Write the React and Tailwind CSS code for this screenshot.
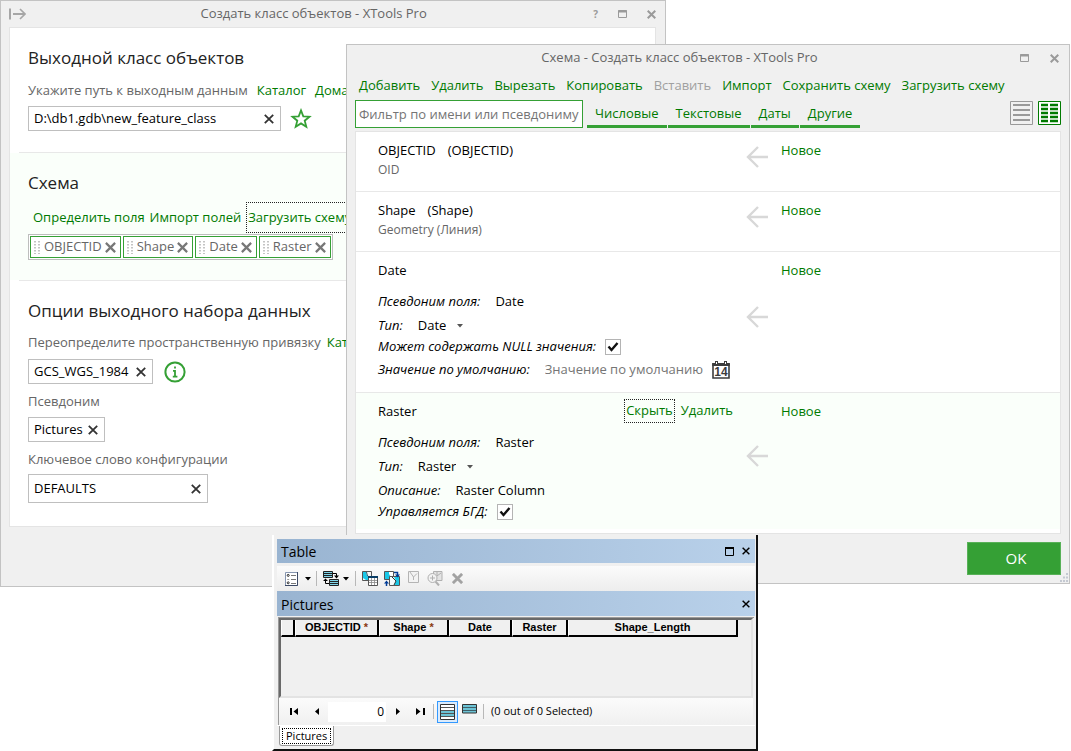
import { useState } from 'react';

const TAGS = ['OBJECTID', 'Shape', 'Date', 'Raster'];

const MENU = [
  { label: 'Добавить' },
  { label: 'Удалить' },
  { label: 'Вырезать' },
  { label: 'Копировать' },
  { label: 'Вставить', disabled: true },
  { label: 'Импорт' },
  { label: 'Сохранить схему' },
  { label: 'Загрузить схему' },
];

const FILTERS = ['Числовые', 'Текстовые', 'Даты', 'Другие'];

const COLUMNS = [
  { label: 'OBJECTID', required: true, width: 'w-[84px]' },
  { label: 'Shape', required: true, width: 'w-[70px]' },
  { label: 'Date', width: 'w-[63px]' },
  { label: 'Raster', width: 'w-[56px]' },
  { label: 'Shape_Length', width: 'w-[170px]' },
];

/* ---------- Icons ---------- */

function Cross({ size = 10, stroke = 1.8, className = '' }) {
  return (
    <svg width={size} height={size} viewBox="0 0 10 10" className={className} fill="none" stroke="currentColor" strokeWidth={stroke}>
      <path d="M0.8 0.8L9.2 9.2M9.2 0.8L0.8 9.2" />
    </svg>
  );
}

function Maximize() {
  return (
    <svg width="9" height="8" viewBox="0 0 9 8" fill="none" stroke="currentColor">
      <path d="M0.5 0.5h8v7h-8z" />
      <path d="M0 1.5h9" strokeWidth="2" />
    </svg>
  );
}

function Star() {
  return (
    <svg width="22" height="21" viewBox="0 0 22 21" fill="none" stroke="#35a035" strokeWidth="1.8" strokeLinejoin="miter">
      <path d="M11 2.4l2.3 5.9 6.2.4-4.8 4 1.6 6.1L11 15.4l-5.3 3.4 1.6-6.1-4.8-4 6.2-.4z" />
    </svg>
  );
}

function Info() {
  return (
    <svg width="22" height="22" viewBox="0 0 22 22" fill="none" stroke="#35a035" strokeWidth="2">
      <circle cx="11" cy="11" r="9.6" />
      <path d="M11 5.5v2M9 9.8h2v5.7M8.8 15.6h4.6" strokeWidth="1.8" />
    </svg>
  );
}

function Grip() {
  return (
    <svg width="7" height="13" viewBox="0 0 7 13" fill="#c4c4c4">
      {[0, 3, 6, 9, 12].map((y) => (
        <path key={y} d={`M0 ${y}h2v1.4h-2zM4 ${y}h2v1.4h-2z`} />
      ))}
    </svg>
  );
}

function ArrowLeft() {
  return (
    <svg width="22" height="22" viewBox="0 0 22 22" fill="none" stroke="#d8d8d8" strokeWidth="2.4">
      <path d="M22 11H2M12 1L2 11l10 10" />
    </svg>
  );
}

function Calendar() {
  return (
    <svg width="18" height="18" viewBox="0 0 18 18" fill="none" stroke="#3c3c3c">
      <path d="M1 3h16v14H1z" fill="#fff" strokeWidth="1.6" />
      <path d="M0.2 3.5h17.6" strokeWidth="3" />
      <path d="M4.5 0v3M13.5 0v3" strokeWidth="3" />
      <path d="M4.5 1v2M13.5 1v2" stroke="#fff" />
      <text x="9" y="15" textAnchor="middle" stroke="none" fill="#3c3c3c" className="font-['Liberation_Sans',sans-serif] text-[12px] font-bold">14</text>
    </svg>
  );
}

function ListOptions() {
  return (
    <svg width="13" height="14" viewBox="0 0 13 14" fill="none">
      <path d="M0.5 0.5h12v13h-12z" fill="#fff" stroke="#8796b0" />
      <path d="M12.5 0v13.5H0" stroke="#3c4a66" />
      <path d="M6 3.5h5M6 7.5h5M6 11.5h5" stroke="#777" />
      <circle cx="3.2" cy="3.4" r="1" stroke="#000" strokeWidth="0.8" />
      <path d="M2.2 7.5h2" stroke="#999" />
      <circle cx="3.2" cy="10.8" r="1" stroke="#000" strokeWidth="0.8" />
    </svg>
  );
}

function RelatedTables() {
  return (
    <svg width="16" height="15" viewBox="0 0 16 15" fill="none">
      <path d="M0.5 0.5h9v6h-9z" fill="#7fd4e8" stroke="#222" />
      <path d="M0 2.5h10M0 4.5h10" stroke="#222" />
      <path d="M6.5 8.5h9v6h-9z" fill="#7fd4e8" stroke="#222" />
      <path d="M6 10.5h10M6 12.5h10" stroke="#222" />
      <path d="M10 2.5h3.5V6M6 12.5H2.5V9" stroke="#000" />
      <path d="M11 4.6h5l-2.5 3zM0 10h5L2.5 7.4z" fill="#000" />
    </svg>
  );
}

function SelectByAttributes() {
  return (
    <svg width="16" height="15" viewBox="0 0 16 15" fill="none">
      <path d="M0.5 0.5h9v9h-9z" fill="#f7f7f7" stroke="#555" />
      <path d="M1 1h3l1 4 4 2v2H4L1 7z" fill="#19c8e8" />
      <path d="M4.5 1l1 4 3.500 1.500" stroke="#2a5a6c" />
      <path d="M6.5 5.5h9v9h-9z" fill="#fff" stroke="#555" />
      <path d="M6 6h10" stroke="#0a3d66" strokeWidth="2" />
      <path d="M7 9.5h8M7 11.5h8M9.5 7v7M12.5 7v7" stroke="#888" strokeWidth="0.8" />
    </svg>
  );
}

function SwitchSelection() {
  return (
    <svg width="16" height="16" viewBox="0 0 16 16" fill="none">
      <path d="M0.5 0.5h9v8h-9z" fill="#19c8e8" stroke="#555" />
      <path d="M5 1h4v5H7L5 3z" fill="#fff" />
      <path d="M5.5 5.5h10v9h-10z" fill="#f4fdff" stroke="#555" />
      <path d="M10 6h5v8h-5l2-4z" fill="#19c8e8" />
      <path d="M8 6l4 4-2 4" stroke="#333" />
      <path d="M10 1.5h3.5V4M2.5 15v-3" stroke="#003c96" strokeWidth="1.5" />
      <path d="M11 3.6h5l-2.5 3zM0 12.4h5l-2.5-3z" fill="#003c96" />
    </svg>
  );
}

function ClearSelection() {
  return (
    <svg width="11" height="12" viewBox="0 0 11 12" fill="none" stroke="#b4b4b4">
      <path d="M0.5 0.5h10v11h-10z" fill="#f3f3f3" />
      <path d="M2 1l3.5 5v3M5.5 6L9 2.500" />
    </svg>
  );
}

function ZoomSelected() {
  return (
    <svg width="16" height="15" viewBox="0 0 16 15" fill="none" stroke="#b0b0b0">
      <path d="M6.5 0.5h8.5v9H6.5z" fill="#e4e4e4" />
      <path d="M10 1v4l4-3" />
      <circle cx="5.5" cy="7" r="4.5" fill="#f3f3f3" />
      <path d="M3 7h5M5.5 4.5v5" />
      <path d="M8.5 10.5l3.5 4" strokeWidth="2" />
    </svg>
  );
}

function Rows({ selectedOnly }) {
  return selectedOnly ? (
    <svg width="15" height="10" viewBox="0 0 15 10" fill="none" stroke="#3f5f68">
      <path d="M0.5 0.5h14v8.5h-14z" fill="#6cc3d5" stroke="#333" />
      <path d="M1 3.5h13M1 6.5h13" />
    </svg>
  ) : (
    <svg width="15" height="16" viewBox="0 0 15 16" fill="none" stroke="#555">
      <path d="M0.5 0.5h14v15h-14z" fill="#fff" stroke="#333" />
      <path d="M1 6h13v6H1z" fill="#6cc3d5" stroke="none" />
      <path d="M1 3.5h13M1 6.5h13M1 9.5h13M1 12.5h13" />
    </svg>
  );
}

function Caret({ className = 'text-black' }) {
  return (
    <svg width="6" height="4" viewBox="0 0 6 4" fill="currentColor" className={`pointer-events-none ${className}`}>
      <path d="M0 0h6L3 3.6z" />
    </svg>
  );
}

/* ---------- Shared controls ---------- */

function LinkButton({ children, disabled, focused }) {
  return (
    <button
      type="button"
      disabled={disabled}
      className={`whitespace-nowrap ${disabled ? 'text-[#a0a0a0]' : 'text-[#007a00]'} ${
        focused ? 'border border-dotted border-[#222] px-px' : ''
      }`}
    >
      {children}
    </button>
  );
}

function ClearableInput({ id, value, className }) {
  const [text, setText] = useState(value);
  return (
    <div className={`flex items-center border border-[#bfbfbf] bg-white pr-[6px] text-black ${className}`}>
      <input
        id={id}
        className="min-w-0 flex-1 bg-transparent pl-[5px] outline-none"
        value={text}
        onChange={(e) => setText(e.target.value)}
      />
      <button type="button" aria-label="Очистить" onClick={() => setText('')} className="text-[#333]">
        <Cross />
      </button>
    </div>
  );
}

function CheckBox({ id }) {
  return (
    <span className="relative inline-flex">
      <input id={id} type="checkbox" defaultChecked className="peer size-4 appearance-none border border-[#b4b4b4] bg-white" />
      <svg viewBox="0 0 16 16" className="pointer-events-none absolute inset-0 hidden size-4 peer-checked:block" fill="none" stroke="#111" strokeWidth="2.4">
        <path d="M3.5 7.5l3 3.5 6-7" />
      </svg>
    </span>
  );
}

function TypeSelect({ id, value }) {
  return (
    <div className="flex items-center gap-[11px]">
      <select id={id} defaultValue={value} className="field-sizing-content appearance-none bg-transparent outline-none">
        <option>Date</option>
        <option>Raster</option>
      </select>
      <Caret className="text-[#555]" />
    </div>
  );
}

/* ---------- "Create feature class" window ---------- */

function CreateWindow() {
  return (
    <section className="absolute top-0 right-[405px] left-0 border border-[#c3c3c3] bg-[#f0f0f0] pr-[9px] pb-[59px] pl-2">
      <header className="flex h-[26px] items-center text-[#9a9a9a]">
        <button type="button" aria-label="Закрепить">
          <svg width="17" height="12" viewBox="0 0 17 12" fill="none" stroke="#a6a6a6" strokeWidth="2">
            <path d="M1 0.5v11M4 6h12" />
            <path d="M11 1l5 5-5 5" strokeWidth="1.6" />
          </svg>
        </button>
        <h1 className="flex-1 pl-2 text-center text-[13px] text-[#666]">Создать класс объектов - XTools Pro</h1>
        <div className="flex items-center gap-5">
          <button type="button" className="text-[10px] font-bold">?</button>
          <button type="button" aria-label="Развернуть"><Maximize /></button>
          <button type="button" aria-label="Закрыть"><Cross size={9} stroke={2.2} /></button>
        </div>
      </header>

      <div className="border border-[#e4e4e4] bg-white pb-[23px]">
        <div className="pl-[18px]">
          <h2 className="pt-4 text-[17px] leading-7 text-[#222]">Выходной класс объектов</h2>
          <div className="mt-[7px] flex h-6 items-center gap-[9px]">
            <label htmlFor="path" className="whitespace-nowrap">Укажите путь к выходным данным</label>
            <LinkButton>Каталог</LinkButton>
            <LinkButton>Дома</LinkButton>
          </div>
          <div className="mt-[3px] flex items-center gap-[9px]">
            <ClearableInput id="path" value="D:\db1.gdb\new_feature_class" className="h-[25px] w-[253px]" />
            <button type="button" aria-label="Избранное"><Star /></button>
          </div>
        </div>

        <div className="mt-[21px] ml-[9px] border-t border-[#e8e8e8]" />
        <div className="bg-[#fafffa] pb-5 pl-[18px]">
          <h2 className="pt-4 text-[17px] leading-7 text-[#222]">Схема</h2>
          <div className="mt-[5px] flex h-[31px] items-stretch gap-[5px] pl-[5px]">
            <LinkButton>Определить поля</LinkButton>
            <LinkButton>Импорт полей</LinkButton>
            <LinkButton focused>Загрузить схему</LinkButton>
          </div>
          <ul className="mt-px flex w-fit gap-[2px] border border-[#bdbdbd] bg-white p-px">
            {TAGS.map((tag) => (
              <li key={tag} className="flex h-[22px] items-center gap-[3px] border border-[#35a035] pr-1 pl-[3px]">
                <Grip />
                <span>{tag}</span>
                <button type="button" aria-label={`Удалить ${tag}`} className="text-[#777]">
                  <Cross size={11} stroke={2} />
                </button>
              </li>
            ))}
          </ul>
        </div>
        <div className="ml-[9px] border-t border-[#e8e8e8]" />

        <div className="pl-[18px]">
          <h2 className="pt-4 text-[17px] leading-7 text-[#222]">Опции выходного набора данных</h2>
          <div className="mt-[6px] flex h-6 items-center gap-[6px]">
            <label htmlFor="srs" className="whitespace-nowrap">Переопределите пространственную привязку</label>
            <LinkButton>Каталог</LinkButton>
          </div>
          <div className="mt-1 flex items-center gap-[11px]">
            <ClearableInput id="srs" value="GCS_WGS_1984" className="h-[25px] w-[125px]" />
            <button type="button" aria-label="Информация"><Info /></button>
          </div>
          <label htmlFor="alias" className="mt-[5px] block leading-6">Псевдоним</label>
          <ClearableInput id="alias" value="Pictures" className="mt-1 h-[25px] w-[77px]" />
          <label htmlFor="keyword" className="mt-[5px] block leading-6">Ключевое слово конфигурации</label>
          <ClearableInput id="keyword" value="DEFAULTS" className="mt-[3px] h-[29px] w-[180px]" />
        </div>
      </div>
    </section>
  );
}

/* ---------- Schema window ---------- */

function FieldRow({ active, actions, children }) {
  return (
    <li className={`grid grid-cols-[390px_35px_1fr] border-b border-[#e8e8e8] pt-[6px] last:border-b-0 ${active ? 'bg-[#fafffa]' : ''}`}>
      <div className="relative pl-[22px] text-black">
        {children}
        {actions && <div className="absolute top-0 right-[13px] flex h-6 items-stretch gap-[6px]">{actions}</div>}
      </div>
      <div className="self-center pb-4"><ArrowLeft /></div>
      <div className="leading-6"><LinkButton>Новое</LinkButton></div>
    </li>
  );
}

function SimpleField({ name, alias, type }) {
  return (
    <FieldRow>
      <div className="flex gap-3 leading-6">
        <span>{name}</span>
        <span>({alias})</span>
      </div>
      <p className="pb-[13px] text-[12px] leading-4 text-[#666]">{type}</p>
    </FieldRow>
  );
}

function Prop({ id, label, gap = 'gap-[15px]', height = 'h-6', children }) {
  return (
    <div className={`flex items-center ${gap} ${height}`}>
      <label htmlFor={id} className="whitespace-nowrap italic">{label}</label>
      {children}
    </div>
  );
}

function SchemaWindow() {
  return (
    <section className="absolute top-11 right-px left-[346px] border border-[#c3c3c3] bg-[#f0f0f0] px-2 pb-2">
      <header className="flex h-[26px] items-center pr-[2px] text-[#9a9a9a]">
        <h1 className="flex-1 pr-4 text-center text-[13px] text-[#666]">Схема - Создать класс объектов - XTools Pro</h1>
        <button type="button" aria-label="Развернуть"><Maximize /></button>
        <button type="button" aria-label="Закрыть" className="ml-[21px]"><Cross size={9} stroke={2.2} /></button>
      </header>

      <nav className="flex h-[29px] items-center gap-[11px] pl-1">
        {MENU.map((item) => (
          <LinkButton key={item.label} disabled={item.disabled}>{item.label}</LinkButton>
        ))}
      </nav>

      <div className="flex items-start">
        <input
          aria-label="Фильтр"
          placeholder="Фильтр по имени или псевдониму"
          className="h-[28px] w-[228px] border border-[#35a035] bg-white px-[3px] outline-none placeholder:text-[#757575]"
        />
        <div className="ml-1 flex gap-px">
          {FILTERS.map((f) => (
            <button key={f} type="button" className="h-[28px] border-b-3 border-[#35a035] px-2 pt-[3px] text-[#007a00]">{f}</button>
          ))}
        </div>
        <div className="mt-px ml-auto flex gap-[5px]">
          <button type="button" aria-label="Список">
            <svg width="23" height="24" viewBox="0 0 23 24" fill="none" stroke="#999">
              <path d="M0.5 0.5h22v23h-22z" />
              <path d="M3 4h17M3 9h17M3 14h17M3 19h17" strokeWidth="2" />
            </svg>
          </button>
          <button type="button" aria-label="Таблица">
            <svg width="23" height="24" viewBox="0 0 23 24" fill="none" stroke="#007a00">
              <path d="M0.5 0.5h22v23h-22z" fill="#fff" />
              <path d="M3 4h7M3 8h7M3 12h7M3 16h7M3 20h7M12 4h8M12 8h8M12 12h8M12 16h8M12 20h8" strokeWidth="2.4" />
            </svg>
          </button>
        </div>
      </div>

      <ul className="mt-[3px] border border-[#e4e4e4] bg-white pb-1">
        <SimpleField name="OBJECTID" alias="OBJECTID" type="OID" />
        <SimpleField name="Shape" alias="Shape" type="Geometry (Линия)" />
        <FieldRow>
          <p className="pb-2 leading-6">Date</p>
          <Prop label="Псевдоним поля:"><span>Date</span></Prop>
          <Prop id="date-type" label="Тип:"><TypeSelect id="date-type" value="Date" /></Prop>
          <Prop id="date-null" label="Может содержать NULL значения:" gap="gap-[9px]" height="h-[18px]"><CheckBox id="date-null" /></Prop>
          <Prop id="date-default" label="Значение по умолчанию:" height="h-7">
            <div className="flex items-center gap-[9px]">
              <input id="date-default" placeholder="Значение по умолчанию" className="field-sizing-content bg-transparent outline-none placeholder:text-[#757575]" />
              <button type="button" aria-label="Выбрать дату"><Calendar /></button>
            </div>
          </Prop>
          <div className="h-2" />
        </FieldRow>
        <FieldRow active actions={<><LinkButton focused>Скрыть</LinkButton><LinkButton>Удалить</LinkButton></>}>
          <p className="pb-2 leading-6">Raster</p>
          <Prop label="Псевдоним поля:"><span>Raster</span></Prop>
          <Prop id="raster-type" label="Тип:"><TypeSelect id="raster-type" value="Raster" /></Prop>
          <Prop label="Описание:"><span>Raster Column</span></Prop>
          <Prop id="raster-managed" label="Управляется БГД:" gap="gap-[9px]" height="h-[18px]"><CheckBox id="raster-managed" /></Prop>
          <div className="h-2" />
        </FieldRow>
      </ul>

      <button type="button" className="mt-2 ml-auto block h-[33px] w-[94px] border border-[#58b158] bg-[#35a035] pl-1 text-[15px] text-white">
        OK
      </button>
      <svg width="9" height="9" viewBox="0 0 9 9" className="absolute right-px bottom-px" fill="#c4c9d2">
        <path d="M7 0h2v2h-2zM4 3.5h2v2h-2zM7 3.5h2v2h-2zM1 7h2v2h-2zM4 7h2v2h-2zM7 7h2v2h-2z" />
      </svg>
    </section>
  );
}

/* ---------- Attribute table window ---------- */

function Separator() {
  return <span className="h-[15px] w-px bg-[#b8b8b8]" />;
}

function TableWindow() {
  return (
    <section className="absolute top-[535px] right-[313px] left-[272px] border-r-2 border-b-2 border-l-2 border-[#111] border-l-white bg-[#f0f0f0] pt-1 pr-px pl-[3px] text-[12px] text-black">
      <header className="flex h-6 items-center bg-linear-to-r from-[#99b4d1] to-[#b9d1ea] pr-[5px] pl-1">
        <h1 className="flex-1 text-[14px]">Table</h1>
        <button type="button" aria-label="Развернуть">
          <svg width="9" height="9" viewBox="0 0 9 9" fill="none" stroke="currentColor">
            <path d="M0.5 0.5h8v8h-8z" />
            <path d="M0 1h9" strokeWidth="2" />
          </svg>
        </button>
        <button type="button" aria-label="Закрыть" className="ml-2"><Cross size={8} /></button>
      </header>

      <div className="mt-[3px] flex h-[25px] items-center bg-linear-to-b from-[#fbfbfb] to-[#ededed] pl-2">
        <button type="button" aria-label="Параметры таблицы" className="flex items-center gap-[7px]"><ListOptions /><Caret /></button>
        <span className="ml-[5px] flex"><Separator /></span>
        <button type="button" aria-label="Связанные таблицы" className="ml-[6px] flex items-center gap-1"><RelatedTables /><Caret /></button>
        <span className="mx-[6px] flex"><Separator /></span>
        <div className="flex items-center gap-[6px]">
          <button type="button" aria-label="Выбрать по атрибутам"><SelectByAttributes /></button>
          <button type="button" aria-label="Переключить выборку"><SwitchSelection /></button>
          <button type="button" aria-label="Снять выборку" className="mx-[2px] pb-1"><ClearSelection /></button>
          <button type="button" aria-label="Приблизить" className="pb-px"><ZoomSelected /></button>
          <button type="button" aria-label="Удалить" className="ml-[3px] text-[#a2a2a2]"><Cross size={11} stroke={2.6} /></button>
        </div>
      </div>

      <div className="flex h-[25px] items-center bg-linear-to-r from-[#99b4d1] to-[#b9d1ea] pr-[5px] pl-1">
        <h2 className="flex-1 pt-px text-[14px]">Pictures</h2>
        <button type="button" aria-label="Закрыть таблицу"><Cross size={8} /></button>
      </div>

      <div className="mx-px mt-px border-t border-l border-[#9a9a9a] pr-px">
        <div className="h-[80px] border-2 border-[#696969] border-r-[#e3e3e3] border-b-[#e3e3e3]">
          <table className="table-fixed border-separate border-spacing-0 font-['Liberation_Sans',sans-serif] text-[11px]">
            <thead>
              <tr>
                <td className="w-[14px] border-r-2 border-b-2 border-black border-l-white border-l" />
                {COLUMNS.map((c) => (
                  <th key={c.label} scope="col" className={`h-[17px] border-r-2 border-b-2 border-l border-black border-l-white p-0 leading-[15px] ${c.width}`}>
                    {c.label}
                    {c.required && <span className="text-[#8a3a10]"> *</span>}
                  </th>
                ))}
              </tr>
            </thead>
          </table>
        </div>
        <div className="flex h-[27px] items-center bg-linear-to-b from-[#fbfbfb] to-[#f0f0f0] pl-[11px]">
          <button type="button" aria-label="Первая запись">
            <svg width="9" height="7" viewBox="0 0 9 7"><path d="M0 0h2v7H0zM8 0v7L3.5 3.5z" /></svg>
          </button>
          <button type="button" aria-label="Предыдущая запись" className="ml-4">
            <svg width="4" height="7" viewBox="0 0 4 7"><path d="M4 0v7L0 3.5z" /></svg>
          </button>
          <input aria-label="Текущая запись" defaultValue="0" className="ml-[9px] h-5 w-[58px] bg-white pr-[2px] text-right outline-none" />
          <button type="button" aria-label="Следующая запись" className="ml-[10px]">
            <svg width="4" height="7" viewBox="0 0 4 7"><path d="M0 0v7l4-3.5z" /></svg>
          </button>
          <button type="button" aria-label="Последняя запись" className="mr-2 ml-4">
            <svg width="9" height="7" viewBox="0 0 9 7"><path d="M7 0h2v7H7zM0 0v7l4.5-3.5z" /></svg>
          </button>
          <Separator />
          <button type="button" aria-label="Все записи" className="ml-[3px] border border-[#3399ff] bg-[#dcebfb] p-[2px]"><Rows /></button>
          <button type="button" aria-label="Выбранные записи" className="mr-[6px] ml-1 pb-[5px]"><Rows selectedOnly /></button>
          <Separator />
          <span className="ml-[7px] text-[11px]">(0 out of 0 Selected)</span>
        </div>
      </div>

      <div className="flex h-6 items-start border-t border-white pl-[2px]">
        <button type="button" className="rounded-b-[3px] border border-t-0 border-[#999] bg-white px-[2px] pt-[2px] pb-px">
          <span className="block border border-dotted border-black px-[3px] text-[11px] leading-[14px]">Pictures</span>
        </button>
      </div>
    </section>
  );
}

function App() {
  return (
    <main className="relative min-h-screen overflow-hidden bg-white font-['Open_Sans',sans-serif] text-[13px] text-[#666]">
      <CreateWindow />
      <SchemaWindow />
      <TableWindow />
    </main>
  );
}

export default App;
